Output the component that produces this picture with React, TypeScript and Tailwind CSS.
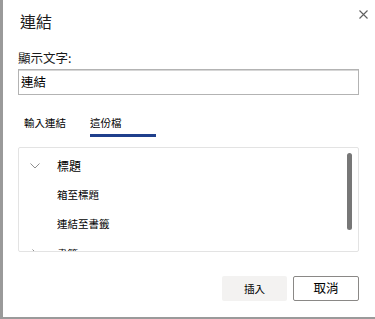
import React from "react";

const font = { fontFamily: '"Noto Sans CJK TC", "Noto Sans", sans-serif' };

export default function App() {
  return (
    <div className="w-[375px] h-[319px] bg-[#9a9a9a] flex overflow-hidden" style={font}>
      <div className="ml-[3px] w-[372px] h-[317px] bg-white relative flex flex-col pl-[15px] pr-[16px]">
        <button className="absolute top-[9px] right-[7px] w-[10px] h-[10px] flex items-center justify-center">
          <svg width="9" height="9" viewBox="0 0 9 9">
            <path d="M0.5 0.5 L8.5 8.5 M8.5 0.5 L0.5 8.5" stroke="#5f5f5f" strokeWidth="1.1" />
          </svg>
        </button>
        <div className="mt-[10px] ml-[2px] text-[16px] leading-[22px] text-[#1b1b1b]">連結</div>
        <div className="mt-[17px] text-[12.5px] leading-[17px] text-[#1b1b1b]">顯示文字:</div>
        <div className="mt-[3px] h-[26px] w-full border border-[#b3b3b3] shadow-[inset_0_1px_0_#d6d6d6] flex items-center pl-[2px] text-[12.5px] text-black">
          連結
        </div>
        <div className="mt-[19px] flex items-start text-[10.5px] leading-[15px] text-black">
          <div className="ml-[6px] pt-[1px]">輸入連結</div>
          <div className="ml-[24px] flex flex-col">
            <div className="pt-[1px]">這份檔</div>
            <div className="mt-[4px] h-[3px] w-[66px] bg-[#1f3f8c]" />
          </div>
        </div>
        <div className="mt-[10px] h-[105px] w-full border border-[#e3e3e3] rounded-[2px] flex overflow-hidden shrink-0">
          <div className="flex-1 flex flex-col">
            <div className="h-[29px] shrink-0 mt-[3px] flex items-center">
              <svg className="ml-[11px]" width="10" height="6" viewBox="0 0 10 6">
                <path d="M0.5 0.5 L5 5 L9.5 0.5" fill="none" stroke="#8f8f8f" strokeWidth="1" />
              </svg>
              <span className="ml-[17px] text-[12px] text-black">標題</span>
            </div>
            <div className="h-[29px] shrink-0 flex items-center pl-[38px] text-[10.5px] text-black">箱至標題</div>
            <div className="h-[29px] shrink-0 flex items-center pl-[38px] text-[10.5px] text-black">連結至書籤</div>
            <div className="h-[29px] shrink-0 flex items-center text-[10.5px] text-black pt-[3px]">
              <svg className="ml-[13px]" width="6" height="10" viewBox="0 0 6 10">
                <path d="M0.5 0.5 L5 5 L0.5 9.5" fill="none" stroke="#8f8f8f" strokeWidth="1" />
              </svg>
              <span className="ml-[19px]">書籤</span>
            </div>
          </div>
          <div className="w-[5px] mr-[6px] mt-[5px] h-[77px] shrink-0 rounded-full bg-[#777777]" />
        </div>
        <div className="mt-[24px] flex justify-end gap-[6px]">
          <button className="w-[65px] h-[25px] bg-[#f3f2f1] text-[10.5px] text-black flex items-center justify-center rounded-[2px]">
            插入
          </button>
          <button className="w-[66px] h-[25px] bg-white border border-[#8a8886] rounded-[2px] text-[12.5px] text-black flex items-center justify-center">
            取消
          </button>
        </div>
      </div>
    </div>
  );
}
